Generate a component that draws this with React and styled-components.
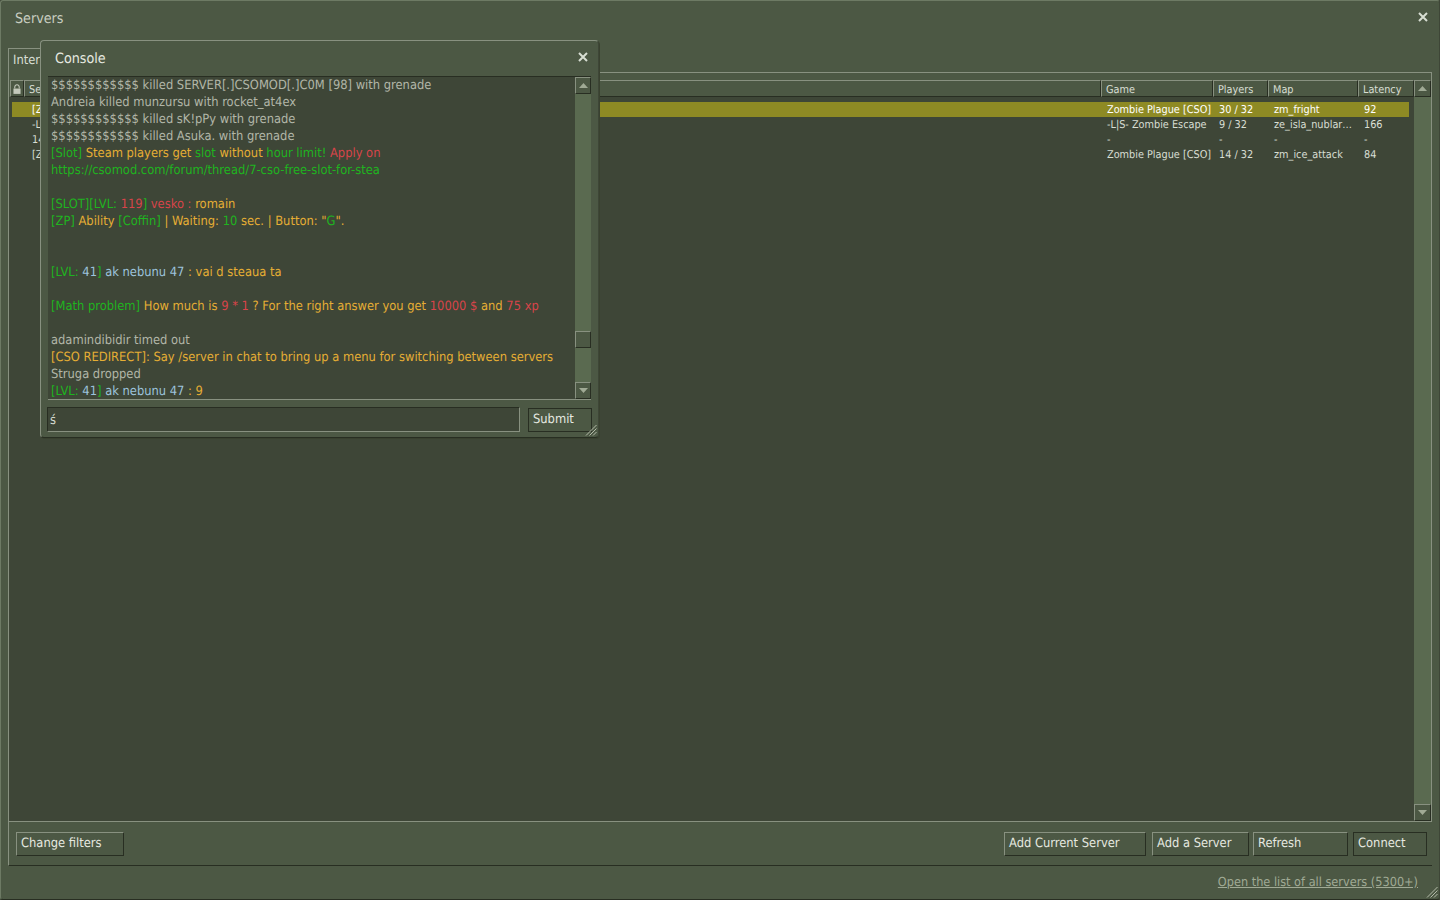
import React from 'react';
import styled, { createGlobalStyle } from 'styled-components';

const GlobalStyle = createGlobalStyle`
  html, body {
    margin: 0;
    padding: 0;
    height: 100%;
    overflow: hidden;
    background: #3e4637;
  }

  body {
    font-family: "DejaVu Sans Condensed", "DejaVu Sans", sans-serif;
    font-stretch: condensed;
    font-size: 12.8px;
    text-rendering: geometricPrecision;
    color: #d8ded3;
  }
`;

const Window = styled.div`
  position: relative;
  box-sizing: border-box;
  width: 1440px;
  height: 900px;
  display: flex;
  flex-direction: column;
  background: #4c5844;
  border-top: 1px solid #6d7a64;
  border-left: 1px solid #6d7a64;
  border-right: 1px solid #3e4637;
  border-bottom: 1px solid #282e22;
  border-radius: 3px;
`;

const TitleBar = styled.div`
  height: 35px;
  flex: none;
  box-sizing: border-box;
  display: flex;
  align-items: center;
  justify-content: space-between;
  padding: 0 11px 0 14px;
  font-size: 14.2px;
  color: #c9cec1;
`;

const CloseButton = styled.svg`
  width: 10px;
  height: 10px;
  display: block;
  margin-bottom: 3px;
  stroke: #d8ded3;
  stroke-width: 2;
  fill: none;
`;

const TabStrip = styled.div`
  height: 24px;
  margin-top: 12px;
  flex: none;
  display: flex;
  padding-left: 7px;
`;

const Tab = styled.div`
  box-sizing: border-box;
  width: 90px;
  height: 25px;
  padding: 4px 0 0 4px;
  background: #4c5844;
  border: 1px solid #889180;
  border-bottom: none;
  position: relative;
  z-index: 1;
`;

const Sheet = styled.div`
  flex: none;
  height: 749px;
  margin: 0 7px;
  display: flex;
  flex-direction: column;
  border: 1px solid #889180;
  border-bottom: none;
  padding-top: 7px;
  box-sizing: border-box;
`;

const HeaderRow = styled.div`
  height: 17px;
  flex: none;
  display: grid;
  grid-template-columns: 14px 1fr 112px 55px 90px 56px 17px;
  margin-left: 1px;
`;

const HeaderCell = styled.div`
  box-sizing: border-box;
  padding: 1px 0 0 ${({ $icon }) => ($icon ? 2 : 4)}px;
  line-height: 15px;
  font-size: 10.8px;
  color: #d8ded3;
  border-top: 1px solid #889180;
  border-left: 1px solid #889180;
  border-right: 1px solid #282e22;
  border-bottom: 1px solid #282e22;
  overflow: hidden;
  white-space: nowrap;
  display: flex;
  align-items: center;
`;

const ListFrame = styled.div`
  flex: 1;
  min-height: 0;
  display: flex;
  background: #3e4637;
`;

const Rows = styled.div`
  flex: 1;
  padding: 5px 5px 0 3px;
`;

const Row = styled.div`
  height: 15px;
  display: grid;
  grid-template-columns: 14px 1fr 112px 55px 90px 51px;
  font-size: 10.8px;
  line-height: 15px;
  color: ${({ $selected }) => ($selected ? '#ffffff' : '#d8ded3')};
  background: ${({ $selected }) => ($selected ? '#8e8a24' : 'transparent')};
`;

const RowCell = styled.div`
  padding-left: 6px;
  overflow: hidden;
  white-space: nowrap;
`;

const ScrollTrack = styled.div`
  width: ${({ $narrow }) => ($narrow ? 16 : 17)}px;
  flex: none;
  display: flex;
  flex-direction: column;
  justify-content: space-between;
  background: #5a6a50;
  position: relative;
`;

const ScrollButton = styled.div`
  box-sizing: border-box;
  height: 17px;
  display: flex;
  align-items: center;
  justify-content: center;
  background: #4c5844;
  border-top: 1px solid #889180;
  border-left: 1px solid #889180;
  border-right: 1px solid #282e22;
  border-bottom: 1px solid #282e22;
`;

const Thumb = styled.div`
  position: absolute;
  left: 0;
  right: 0;
  top: ${({ $top }) => $top}px;
  height: 17px;
  box-sizing: border-box;
  background: #4c5844;
  border-top: 1px solid #889180;
  border-left: 1px solid #889180;
  border-right: 1px solid #282e22;
  border-bottom: 1px solid #282e22;
`;

const Arrow = styled.svg`
  width: 9px;
  height: 5px;
  display: block;
  fill: #a0aa95;
`;

const FooterBar = styled.div`
  flex: none;
  height: 45px;
  margin: 0 7px;
  box-sizing: border-box;
  border-top: 1px solid #889180;
  border-left: 1px solid #889180;
  border-bottom: 1px solid #282e22;
  display: flex;
  align-items: center;
  padding: 0 5px 0 7px;
  gap: 4px;
`;

const Button = styled.button`
  box-sizing: border-box;
  width: ${({ $width }) => $width}px;
  height: 24px;
  margin-left: ${({ $gapLeft }) => $gapLeft || 0}px;
  padding: 0 0 0 4px;
  text-align: left;
  font-family: inherit;
  font-stretch: inherit;
  font-size: 12.8px;
  text-rendering: geometricPrecision;
  color: #e6e9e0;
  background: #4c5844;
  border-top: 1px solid ${({ $primary }) => ($primary ? '#282e22' : '#889180')};
  border-left: 1px solid ${({ $primary }) => ($primary ? '#282e22' : '#889180')};
  border-right: 1px solid #282e22;
  border-bottom: 1px solid #282e22;
  ${({ $primary }) => $primary && 'outline: 1px solid #282e22; outline-offset: -1px;'}
`;

const Spacer = styled.div`
  flex: 1;
`;

const LinkRow = styled.div`
  flex: 1;
  display: flex;
  align-items: center;
  justify-content: flex-end;
  padding: 0 21px 2px 0;
`;

const ServerLink = styled.a`
  color: #a0aa95;
  text-decoration: underline;
  font-size: 12.6px;
`;

const Grip = styled.svg`
  position: absolute;
  right: ${({ $inset }) => $inset}px;
  bottom: ${({ $inset }) => $inset}px;
  width: 12px;
  height: 12px;
  stroke: #b4bba9;
  stroke-width: 1;
  fill: none;
`;

const ConsoleWindow = styled.div`
  position: absolute;
  left: 39px;
  top: 39px;
  width: 559px;
  height: 398px;
  box-sizing: border-box;
  display: flex;
  flex-direction: column;
  z-index: 5;
  background: #4c5844;
  border-top: 1px solid #889180;
  border-left: 1px solid #889180;
  border-right: 1px solid #3e4637;
  border-bottom: 1px solid #282e22;
  border-radius: 4px;
  box-shadow: 1px 1px 0 #39412f;
`;

const ConsoleTitle = styled.div`
  flex: none;
  height: 35px;
  box-sizing: border-box;
  display: flex;
  align-items: center;
  justify-content: space-between;
  padding: 0 10px 0 14px;
  font-size: 14.2px;
  color: #e6e9e0;
`;

const ConsoleBody = styled.div`
  flex: none;
  height: 324px;
  margin: 0 7px;
  display: flex;
  background: #3e4637;
  border-top: 1px solid #282e22;
  border-bottom: 1px solid #889180;
  box-sizing: border-box;
`;

const LogText = styled.div`
  flex: 1;
  overflow: hidden;
  padding-left: 3px;
  line-height: 17px;
`;

const LogLine = styled.div`
  height: 17px;
  white-space: pre;
`;

const toneColors = {
  grey: '#b2b6a8',
  green: '#1fb41f',
  orange: '#e6ae34',
  red: '#d8444a',
  blue: '#9cc3dc',
};

const Seg = styled.span`
  color: ${({ $tone }) => toneColors[$tone]};
`;

const InputRow = styled.div`
  flex: none;
  display: flex;
  align-items: center;
  gap: 8px;
  margin: 7px 6px 0 6px;
`;

const ConsoleInput = styled.div`
  flex: 1;
  box-sizing: border-box;
  height: 25px;
  padding-left: 2px;
  line-height: 25px;
  background: #3e4637;
  border-top: 1px solid #282e22;
  border-left: 1px solid #282e22;
  border-right: 1px solid #889180;
  border-bottom: 1px solid #889180;
`;

const servers = [
  { name: '[ZP] Zombie Plague', game: 'Zombie Plague [CSO]', players: '30 / 32', map: 'zm_fright', latency: '92', selected: true },
  { name: '-L|S- Zombie Escape', game: '-L|S- Zombie Escape', players: '9 / 32', map: 'ze_isla_nublar…', latency: '166' },
  { name: '145.239.0.1:27015', game: '-', players: '-', map: '-', latency: '-' },
  { name: '[ZP] Zombie Plague', game: 'Zombie Plague [CSO]', players: '14 / 32', map: 'zm_ice_attack', latency: '84' },
];

const log = [
  [['grey', '$$$$$$$$$$$$ killed SERVER[.]CSOMOD[.]C0M [98] with grenade']],
  [['grey', 'Andreia killed munzursu with rocket_at4ex']],
  [['grey', '$$$$$$$$$$$$ killed sK!pPy with grenade']],
  [['grey', '$$$$$$$$$$$$ killed Asuka. with grenade']],
  [['green', '[Slot] '], ['orange', 'Steam players get '], ['green', 'slot '], ['orange', 'without '], ['green', 'hour limit! '], ['red', 'Apply on']],
  [['green', 'https://csomod.com/forum/thread/7-cso-free-slot-for-stea']],
  [],
  [['green', '[SLOT][LVL: '], ['red', '119'], ['green', '] '], ['red', 'vesko : '], ['orange', 'romain']],
  [['green', '[ZP] '], ['orange', 'Ability '], ['green', '[Coffin] '], ['orange', '| Waiting: '], ['green', '10 '], ['orange', 'sec. | Button: "'], ['green', 'G'], ['orange', '".']],
  [],
  [],
  [['green', '[LVL: '], ['blue', '41'], ['green', '] '], ['blue', 'ak nebunu 47 '], ['orange', ': vai d steaua ta']],
  [],
  [['green', '[Math problem] '], ['orange', 'How much is '], ['red', '9 * 1 '], ['orange', '? For the right answer you get '], ['red', '10000 $ '], ['orange', 'and '], ['red', '75 xp']],
  [],
  [['grey', 'adamindibidir timed out']],
  [['orange', '[CSO REDIRECT]: Say /server in chat to bring up a menu for switching between servers']],
  [['grey', 'Struga dropped']],
  [['green', '[LVL: '], ['blue', '41'], ['green', '] '], ['blue', 'ak nebunu 47 '], ['orange', ': 9']],
];

const Cross = () => (
  <CloseButton viewBox="0 0 10 10">
    <path d="M1 1 L9 9 M9 1 L1 9" />
  </CloseButton>
);

const UpArrow = () => (
  <Arrow viewBox="0 0 9 5">
    <path d="M4.5 0 L9 5 L0 5 Z" />
  </Arrow>
);

const DownArrow = () => (
  <Arrow viewBox="0 0 9 5">
    <path d="M0 0 L9 0 L4.5 5 Z" />
  </Arrow>
);

const GripLines = ({ inset }) => (
  <Grip $inset={inset} viewBox="0 0 12 12">
    <path d="M11.5 1 L1 11.5 M11.5 4.5 L4.5 11.5 M11.5 8 L8 11.5" />
  </Grip>
);

const LockIcon = () => (
  <svg width="8" height="10" viewBox="0 0 9 11">
    <path d="M2 5 V3.2 a2.5 2.5 0 0 1 5 0 V5" fill="none" stroke="#c4c9bb" strokeWidth="1.2" />
    <rect x="0.5" y="5" width="8" height="6" fill="#c4c9bb" />
  </svg>
);

const App = () => (
  <>
    <GlobalStyle />
    <Window>
      <TitleBar>
        Servers
        <Cross />
      </TitleBar>

      <TabStrip>
        <Tab>Internet</Tab>
      </TabStrip>

      <Sheet>
        <HeaderRow>
          <HeaderCell $icon><LockIcon /></HeaderCell>
          <HeaderCell>Servers</HeaderCell>
          <HeaderCell>Game</HeaderCell>
          <HeaderCell>Players</HeaderCell>
          <HeaderCell>Map</HeaderCell>
          <HeaderCell>Latency</HeaderCell>
          <ScrollButton><UpArrow /></ScrollButton>
        </HeaderRow>
        <ListFrame>
          <Rows>
            {servers.map(server => (
              <Row key={server.name + server.players} $selected={server.selected}>
                <RowCell />
                <RowCell>{server.name}</RowCell>
                <RowCell>{server.game}</RowCell>
                <RowCell>{server.players}</RowCell>
                <RowCell>{server.map}</RowCell>
                <RowCell>{server.latency}</RowCell>
              </Row>
            ))}
          </Rows>
          <ScrollTrack>
            <span />
            <ScrollButton><DownArrow /></ScrollButton>
          </ScrollTrack>
        </ListFrame>
      </Sheet>

      <FooterBar>
        <Button $width={108}>Change filters</Button>
        <Spacer />
        <Button $width={142}>Add Current Server</Button>
        <Button $width={97} $gapLeft={2}>Add a Server</Button>
        <Button $width={95}>Refresh</Button>
        <Button $width={74} $gapLeft={1} $primary>Connect</Button>
      </FooterBar>

      <LinkRow>
        <ServerLink href="#all">Open the list of all servers (5300+)</ServerLink>
      </LinkRow>
      <GripLines inset={1} />

      <ConsoleWindow>
        <ConsoleTitle>
          Console
          <Cross />
        </ConsoleTitle>
        <ConsoleBody>
          <LogText>
            {log.map((line, i) => (
              <LogLine key={i}>
                {line.map(([tone, text], j) => (
                  <Seg key={j} $tone={tone}>{text}</Seg>
                ))}
              </LogLine>
            ))}
          </LogText>
          <ScrollTrack $narrow>
            <ScrollButton><UpArrow /></ScrollButton>
            <Thumb $top={254} />
            <ScrollButton><DownArrow /></ScrollButton>
          </ScrollTrack>
        </ConsoleBody>
        <InputRow>
          <ConsoleInput>ś</ConsoleInput>
          <Button $width={64} $primary>Submit</Button>
        </InputRow>
        <GripLines inset={1} />
      </ConsoleWindow>
    </Window>
  </>
);

export default App;
